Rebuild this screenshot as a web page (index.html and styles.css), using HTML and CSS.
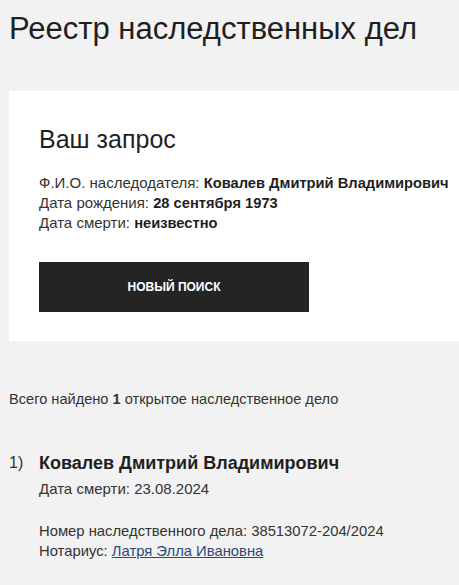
FILE: index.html
```html
<!DOCTYPE html>
<html lang="ru">
<head>
    <meta charset="UTF-8">
    <meta name="viewport" content="width=device-width, initial-scale=1.0">
    <title>Реестр наследственных дел</title>
    <link rel="stylesheet" href="styles.css">
</head>
<body>
    <div class="page">
        <h1 class="page-title">Реестр наследственных дел</h1>

        <div class="request">
            <h2 class="request-title">Ваш запрос</h2>
            <div class="request-info">
                <div>Ф.И.О. наследодателя: <b>Ковалев Дмитрий Владимирович</b></div>
                <div>Дата рождения: <b>28 сентября 1973</b></div>
                <div>Дата смерти: <b>неизвестно</b></div>
            </div>
            <button class="btn">НОВЫЙ ПОИСК</button>
        </div>

        <div class="summary">Всего найдено <b>1</b> открытое наследственное дело</div>

        <div class="case">
            <div class="case-num">1)</div>
            <div class="case-body">
                <div class="case-name">Ковалев Дмитрий Владимирович</div>
                <div class="case-death">Дата смерти: 23.08.2024</div>
                <div class="case-meta">
                    <div>Номер наследственного дела: 38513072-204/2024</div>
                    <div>Нотариус: <a href="#" class="notary">Латря Элла Ивановна</a></div>
                </div>
            </div>
        </div>
    </div>
</body>
</html>
```

FILE: styles.css
```css
* {
    box-sizing: border-box;
    margin: 0;
    padding: 0;
}

body {
    font-family: 'Liberation Sans', Arial, sans-serif;
    background-color: #f2f2f2;
    color: #222;
    overflow: hidden;
}

.page {
    padding: 9px 0 0 9px;
}

.page-title {
    font-size: 31px;
    font-weight: normal;
    line-height: 40px;
    color: #1f1f1f;
}

.request {
    margin-top: 42px;
    background-color: #fff;
    padding: 32px 0 29px 30px;
    white-space: nowrap;
    overflow: hidden;
}

.request-title {
    font-size: 25px;
    font-weight: normal;
    line-height: 32px;
    color: #1f1f1f;
}

.request-info {
    margin-top: 18px;
    font-size: 15px;
    line-height: 20px;
    color: #333;
}

.request-info b {
    color: #1f1f1f;
    font-size: 14.7px;
}

.btn {
    margin-top: 29px;
    width: 270px;
    height: 50px;
    border: none;
    background-color: #242424;
    color: #fff;
    font-family: inherit;
    font-size: 12px;
    font-weight: bold;
}

.summary {
    margin-top: 48px;
    font-size: 14.6px;
    line-height: 20px;
    color: #333;
}

.case {
    display: flex;
    margin-top: 42px;
}

.case-num {
    width: 30px;
    font-size: 16px;
    line-height: 24px;
    color: #333;
}

.case-name {
    font-size: 18px;
    font-weight: bold;
    line-height: 24px;
    color: #1f1f1f;
}

.case-death {
    margin-top: 4px;
    font-size: 15px;
    line-height: 20px;
    color: #333;
}

.case-meta {
    margin-top: 22px;
    font-size: 14.8px;
    line-height: 20px;
    color: #333;
}

.notary {
    color: #2c4a7c;
}
```
